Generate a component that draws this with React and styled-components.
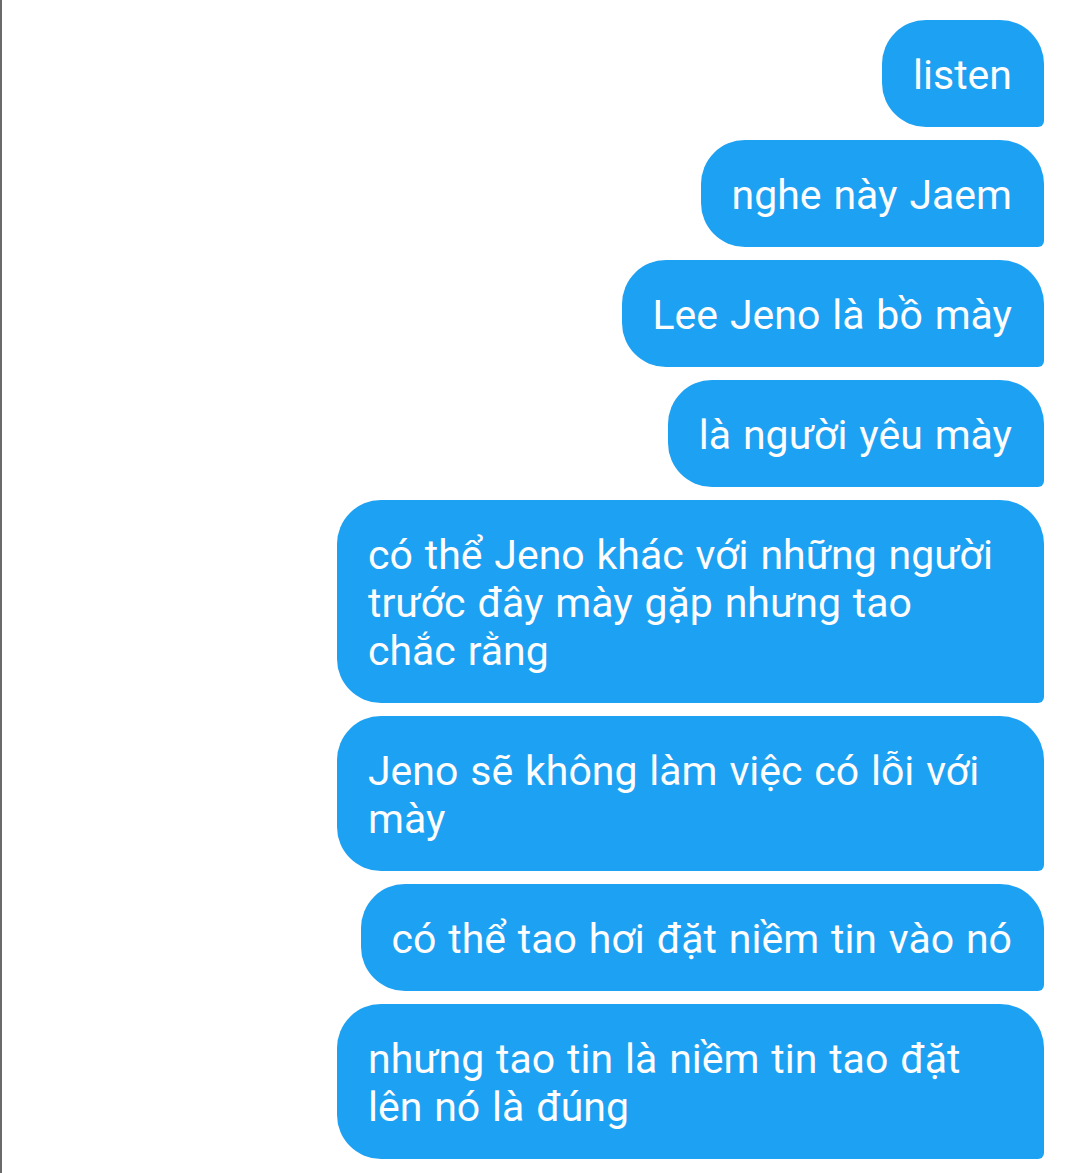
import styled, { createGlobalStyle } from "styled-components";

const GlobalStyle = createGlobalStyle`
  body {
    margin: 0;
    background: #ffffff;
    font-family: Roboto, "Noto Sans", sans-serif;
  }
`;

const Screen = styled.div`
  min-height: 100vh;
  box-sizing: border-box;
  border-left: 2px solid #6a6a6a;
  padding: 20px 36px 20px 0;
  display: flex;
  flex-direction: column;
  align-items: flex-end;
  gap: 13px;
`;

const Bubble = styled.div`
  width: ${(p) => (p.$wide ? "707px" : "auto")};
  max-width: 707px;
  box-sizing: border-box;
  padding: 31px 32px 28px 31px;
  background: #1da1f2;
  color: #fdfdfd;
  font-size: 41px;
  line-height: 48px;
  word-spacing: 1.7px;
  border-radius: 44px 44px 6px 44px;
`;

const Text = styled.div`
  max-width: 636px;
`;

const messages = [
  { text: "listen" },
  { text: "nghe này Jaem" },
  { text: "Lee Jeno là bồ mày" },
  { text: "là người yêu mày" },
  {
    text: "có thể Jeno khác với những người trước đây mày gặp nhưng tao chắc rằng",
    wide: true,
  },
  { text: "Jeno sẽ không làm việc có lỗi với mày", wide: true },
  { text: "có thể tao hơi đặt niềm tin vào nó" },
  { text: "nhưng tao tin là niềm tin tao đặt lên nó là đúng", wide: true },
];

export default function App() {
  return (
    <>
      <GlobalStyle />
      <Screen>
        {messages.map((m, i) => (
          <Bubble key={i} $wide={m.wide}>
            <Text>{m.text}</Text>
          </Bubble>
        ))}
      </Screen>
    </>
  );
}
